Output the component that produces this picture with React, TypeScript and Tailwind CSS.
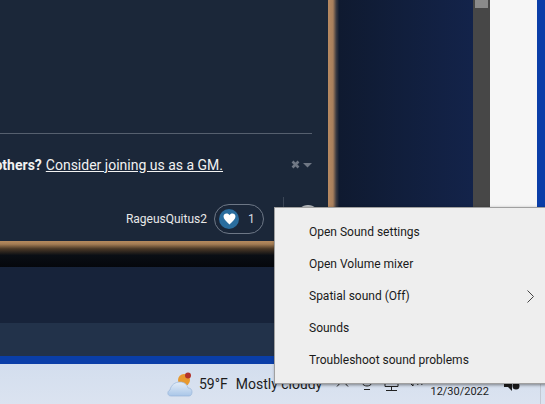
const menuItems = [
  "Open Sound settings",
  "Open Volume mixer",
  "Spatial sound (Off)",
  "Sounds",
  "Troubleshoot sound problems",
];

const uiFont = "font-['Roboto','Noto_Sans',sans-serif]";

const WeatherIcon = () => (
  <svg width="26" height="26" viewBox="0 0 26 26" className="shrink-0">
    <defs>
      <linearGradient id="cloud" x1="0" y1="0" x2="0" y2="1">
        <stop offset="0" stopColor="#e4edf8" />
        <stop offset="1" stopColor="#a9c6e8" />
      </linearGradient>
    </defs>
    <circle cx="17" cy="9" r="6" fill="#e8992f" />
    <path
      d="M4 25c-4 0-4-5-1-6 1-5 5-8 10-8 4 0 7 2 8 6 3 0 4 2 4 4s-1 4-3 4z"
      fill="url(#cloud)"
      stroke="#9ab6da"
      strokeWidth="0.7"
    />
    <circle cx="21" cy="4.500" r="3" fill="#b3332a" />
  </svg>
);

const TrayIcons = () => (
  <div className="flex items-center text-[#222]">
    <svg width="13" height="8" viewBox="0 0 13 8" className="mt-[-3px]">
      <path d="M1 7.500l5.500-6 5.500 6" fill="none" stroke="currentColor" strokeWidth="1" />
    </svg>
    <svg width="12" height="12" viewBox="0 0 12 12" className="ml-[12px] mt-[2px]">
      <path d="M1 4c2 4 8 4 10 0M3 10.500h6" fill="none" stroke="currentColor" strokeWidth="1" />
    </svg>
    <svg width="15" height="14" viewBox="0 0 15 14" className="ml-[11px]">
      <path d="M1 1h13v8.500H1zM7.500 9.500v4M2 13.500h11" fill="none" stroke="currentColor" strokeWidth="1" />
    </svg>
    <svg width="17" height="12" viewBox="0 0 17 12" className="ml-[7px] mt-[-4px]">
      <path d="M1 4h3l3-3v9L4 7H1zM10 4l2 5M14 3l2 6" fill="none" stroke="currentColor" strokeWidth="1" />
    </svg>
  </div>
);

const SoundMenu = () => (
  <div
    className={`absolute left-[274px] top-[207px] h-[177px] w-[272px] border border-[#a0a0a0] bg-[#eeeeee] pt-2 shadow-[1px_1px_3px_rgba(0,0,0,0.45)] ${uiFont}`}
  >
    {menuItems.map((item) => (
      <div
        key={item}
        className="flex h-8 items-center justify-between pl-[34px] pr-[11px] text-[12px] text-[#1a1a1a]"
      >
        <span>{item}</span>
        {item.startsWith("Spatial") && (
          <svg width="7" height="13" viewBox="0 0 7 13">
            <path d="M0.500 0.500l6 6-6 6" fill="none" stroke="#444" strokeWidth="1" />
          </svg>
        )}
      </div>
    ))}
  </div>
);

export default function App() {
  return (
    <div className={`relative flex h-[404px] w-[545px] flex-col overflow-hidden bg-[#d5dfee] ${uiFont}`}>
      <div className="flex h-[356px] shrink-0">
        <div className="flex w-[473px] shrink-0 flex-col">
          <div className="flex h-[241px] shrink-0">
            <div className="flex w-[328px] shrink-0 flex-col overflow-hidden bg-[#1b2739] pr-4 pt-[133px] text-white">
              <div className="h-px bg-[#56606f]" />
              <div className="mt-[23px] flex h-4 items-center justify-end whitespace-nowrap text-[14px] text-[#f2f2f2]">
                <b>others?</b>
                <a className="ml-1 underline">Consider joining us as a GM.</a>
                <svg width="21" height="10" viewBox="0 0 21 10" className="ml-[68px] shrink-0">
                  <path d="M1.500 1.500l6 6M7.500 1.500l-6 6" stroke="#6f7784" strokeWidth="2.600" />
                  <path d="M12 3h9l-4.500 4.500z" fill="#6f7784" />
                </svg>
              </div>
              <div className="mt-[31px] mr-[-7px] flex items-center justify-end">
                <span className="text-[12px] text-[#e8e8e8]">RageusQuitus2</span>
                <div className="ml-[7px] flex h-[30px] w-[50px] items-center rounded-full border border-[#6d7786] pl-[4px]">
                  <div className="flex size-5 items-center justify-center rounded-full bg-[#2a6d9e]">
                    <svg width="13" height="12" viewBox="0 0 24 22">
                      <path
                        d="M12 21C5 15 1 11 1 6.500 1 3 3.500 1 6.500 1 9 1 11 2.300 12 4c1-1.700 3-3 5.500-3C20.500 1 23 3 23 6.500 23 11 19 15 12 21z"
                        fill="#ffffff"
                      />
                    </svg>
                  </div>
                  <span className="ml-[9px] text-[12px] text-[#d8dce2]">1</span>
                </div>
                <div className="ml-[19px] mt-[-7px] h-[14px] w-px self-start bg-[#3b4656]" />
                <div className="ml-[13px] mt-px size-[22px] self-start rounded-full bg-[#b9bcc0]" />
              </div>
            </div>
            <div className="w-[11px] shrink-0 bg-[linear-gradient(to_right,#b88a62_0%,#a87f5c_45%,#3a3a42_75%,#121c30_100%)]" />
            <div className="flex-1 bg-linear-to-r from-[#0f1a30] to-[#13234a]" />
          </div>
          <div className="h-[26px] shrink-0 bg-[linear-gradient(to_bottom,#b58a5e_0%,#a37c54_12%,#4a3826_30%,#0a0e14_55%,#05070c_100%)]" />
          <div className="h-[56px] shrink-0 bg-[#17233a]" />
          <div className="flex-1 bg-[#22324a]" />
        </div>
        <div className="w-[17px] shrink-0 bg-[#474747] px-[2px]">
          <div className="h-2 bg-[#8a8a8a]" />
        </div>
        <div className="w-[47px] shrink-0 bg-[#f6f6f6]" />
        <div className="flex-1 bg-[#0a3ea8]" />
      </div>
      <div className="h-2 shrink-0 bg-[#0a3ea8]" />
      <div className="flex flex-1 items-center bg-linear-to-b from-[#d3deee] to-[#dbe3f0] pl-[167px] pr-[4px] text-[#1c1c1c]">
        <WeatherIcon />
        <span className="ml-[6px] text-[14px]">59°F</span>
        <span className="ml-[8px] text-[14px]">Mostly cloudy</span>
        <div className="ml-auto flex items-center">
          <TrayIcons />
          <span className="ml-[7px] mt-[16px] text-[11px]">12/30/2022</span>
          <svg width="17" height="14" viewBox="0 0 17 14" className="ml-[14px] shrink-0">
            <path d="M1 5h4l4-3v12L5 10H1z" fill="#1c1c1c" />
            <circle cx="13" cy="9" r="3.500" fill="#1c1c1c" />
          </svg>
          <div className="ml-[20px] mt-[20px] h-5 w-px bg-[#c2c8d3]" />
        </div>
      </div>
      <SoundMenu />
    </div>
  );
}
